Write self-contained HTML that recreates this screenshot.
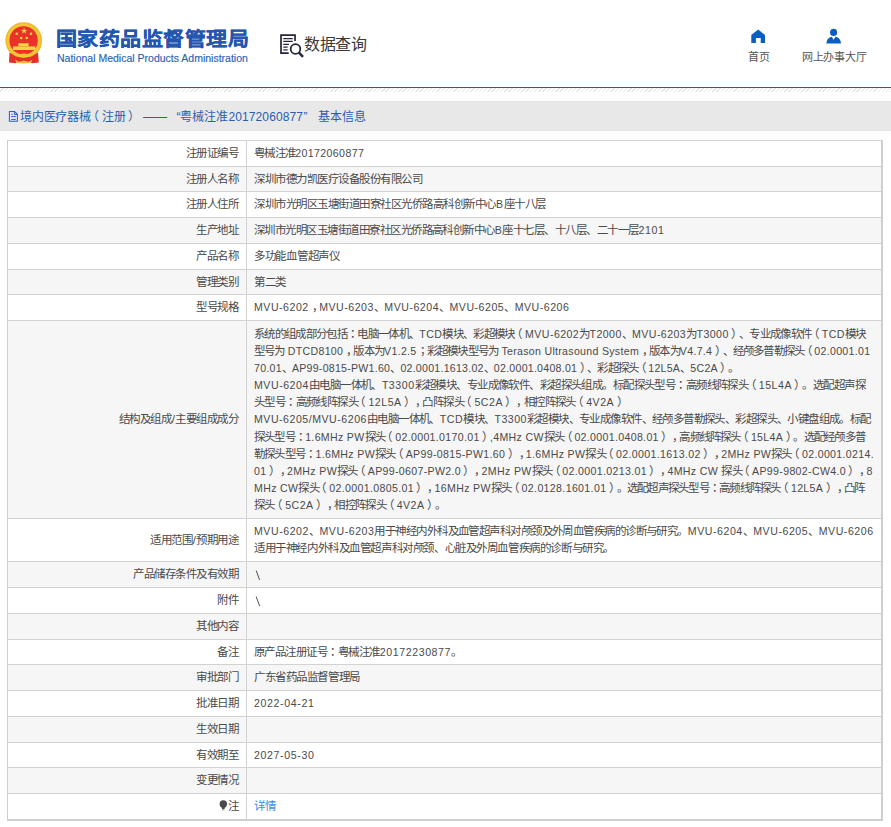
<!DOCTYPE html>
<html lang="zh-CN">
<head>
<meta charset="utf-8">
<style>
*{margin:0;padding:0;box-sizing:border-box}
html,body{width:891px;height:827px;overflow:hidden;background:#fff}
body{font-family:"Liberation Sans",sans-serif;position:relative;color:#444;text-spacing-trim:space-all}
.ln{--d:0px;letter-spacing:calc(var(--cj) + var(--d))}.la{font-size:10.6px;letter-spacing:calc(var(--lt) + var(--d))}:root{--cj:-0.5px;--lt:0.6px}
.bs{display:inline-block;vertical-align:-3px;margin-left:0.5px}
.pm{position:relative;left:3px}
.po{position:relative;left:-3.6px}.pc{position:relative;left:2.4px}
.abs{position:absolute}
#logo-t{left:56px;top:26px;font-size:21px;letter-spacing:0.45px;transform:scaleY(0.92);transform-origin:0 0;-webkit-text-stroke:0.3px #2456b0;font-weight:bold;color:#2456b0;white-space:nowrap;line-height:30px}
#logo-e{left:57px;top:52px;font-size:10.5px;-webkit-text-stroke:0.15px #2d5fb3;color:#2d5fb3;white-space:nowrap;line-height:13px}
#query{left:304px;top:33px;letter-spacing:-0.3px;font-size:16px;color:#3a3a3a;white-space:nowrap;line-height:24px}
.nav{font-size:11px;letter-spacing:-0.3px;color:#555;white-space:nowrap;line-height:14px}
#topline{left:0;top:87px;width:891px;height:1px;background:#0b5ec2}
#hatch{left:0;top:88px;width:891px;height:4px;background:repeating-linear-gradient(135deg,#fff 0,#fff 2px,#e6e6e6 2px,#e6e6e6 3px)}
#bar{left:0;top:101px;width:891px;height:30px;background:#e8e8e8}
.bt{top:109px;font-size:12px;color:#2a5db0;white-space:nowrap;line-height:17px}
#tbl{left:7px;top:140px;width:876px;height:681px;border:1px solid #cfcfcf;border-top:0;border-right-width:2px;border-bottom-width:2px}
.row{position:absolute;left:8px;width:873px;border-top:1px solid #d2d2d2}
.row.g{background:#f6f6f6}
.lab{position:absolute;left:0;width:238px;text-align:right;padding-right:8px;font-size:11.5px;line-height:17.05px;color:#4a4a4a;white-space:nowrap}
.val{position:absolute;left:246px;font-size:11.5px;line-height:17.05px;color:#4a4a4a;white-space:nowrap}
#vline{left:246px;top:140px;width:1px;height:680px;background:#d2d2d2}
.lnk{color:#3b8ee8}
.bulb{display:inline-block;width:9px;height:11px;margin-right:0px;vertical-align:-1px;background:none}
</style>
</head>
<body>
<!-- emblem -->
<svg class="abs" style="left:2px;top:18px" width="46" height="50" viewBox="0 0 46 50">
  <circle cx="21.75" cy="22.6" r="17.6" fill="#f5c737" stroke="#f0b92a" stroke-width="1.5"/>
  <circle cx="21.6" cy="22.4" r="14.2" fill="#e8322a"/>
  <path d="M7.5 34.5 L14 38.5 L21.7 40 L29.5 38.5 L36 34.5 L36.8 44.5 L30 45.2 L26 43.8 L21.7 44.8 L17.5 43.8 L13.5 45.2 L7 44.5 Z" fill="#e52f28"/>
  <path d="M8.5 33 Q21.7 42 35 33" fill="none" stroke="#f3c23a" stroke-width="1.6"/>
  <path d="M17 36.8 Q21.7 34.2 26.5 36.8 Q21.7 39.4 17 36.8 Z" fill="#f3c23a"/>
  <path d="M13 41.5 L17 44 L21.7 42.5 L26.5 44 L30.5 41.5 L29 45 L21.7 45.5 L14.5 45 Z" fill="#f3c23a"/>
  <polygon points="22.1,9.6 22.9,11.9 25.3,11.9 23.4,13.3 24.1,15.6 22.1,14.2 20.1,15.6 20.8,13.3 18.9,11.9 21.3,11.9" fill="#f6d045"/>
  <circle cx="14.8" cy="15.7" r="1.3" fill="#f6d045"/>
  <circle cx="29" cy="15.7" r="1.3" fill="#f6d045"/>
  <circle cx="19.2" cy="20" r="1.3" fill="#f6d045"/>
  <circle cx="24.8" cy="20" r="1.3" fill="#f6d045"/>
  <rect x="16.3" y="25.2" width="10.3" height="3.2" fill="#f6d045"/>
  <rect x="10.9" y="28.4" width="22.4" height="3.6" fill="#f6d045"/>
</svg>
<div id="logo-t" class="abs">国家药品监督管理局</div>
<div id="logo-e" class="abs">National Medical Products Administration</div>
<svg class="abs" style="left:276px;top:30px" width="32" height="30" viewBox="0 0 32 30">
  <path d="M12.7 23.2 H5 V5.2 H19.05 V10.9" fill="none" stroke="#25253b" stroke-width="1.7"/>
  <path d="M7.3 8.5 H16.7 M7.3 11.4 H16.7 M7.3 14.3 H12.9 M7.3 17.05 H11.6 M7.3 19.8 H11.6" stroke="#25253b" stroke-width="1.25"/>
  <circle cx="19.5" cy="19" r="4.8" fill="none" stroke="#25253b" stroke-width="1.8"/>
  <path d="M22.8 22.4 L27 26.8" stroke="#25253b" stroke-width="2.4"/>
</svg>
<div id="query" class="abs">数据查询</div>
<svg class="abs" style="left:746px;top:24px" width="24" height="24" viewBox="0 0 24 24">
  <path d="M5.3 11 L12.2 5.6 L19 11 V18.9 H14.7 V13.9 H9.9 V18.9 H5.3 Z" fill="#0a5fc4"/>
</svg>
<svg class="abs" style="left:822px;top:24px" width="24" height="24" viewBox="0 0 24 24">
  <circle cx="11.6" cy="8.4" r="3.55" fill="#0a5fc4"/>
  <path d="M4.35 19.4 C4.6 15.5 6.8 13.2 9.7 12.8 L11.6 15.7 L13.5 12.8 C16.5 13.2 18.8 15.5 19 19.4 Z" fill="#0a5fc4"/>
</svg>
<div class="abs nav" style="left:748px;top:50px">首页</div>
<div class="abs nav" style="left:802px;top:50px">网上办事大厅</div>
<div id="topline" class="abs"></div>
<div id="hatch" class="abs"></div>
<div id="bar" class="abs"></div>
<svg class="abs" style="left:4px;top:104px" width="24" height="24" viewBox="0 0 24 24">
  <path d="M5.4 7.5 H10.6 L13.4 10.3 V17.3 H5.4 Z" fill="none" stroke="#2d5fc8" stroke-width="1.05"/>
  <path d="M10.4 7.5 V10.5 H13.4" fill="none" stroke="#2d5fc8" stroke-width="1"/>
  <path d="M7.1 10.3 H8.7 M7.1 12.5 H11.9 M7.1 15.4 H11.9" stroke="#3a5fc8" stroke-width="1"/>
</svg>
<div class="abs bt" id="bt1" style="left:20px;letter-spacing:-0.25px">境内医疗器械<span class="po">（</span>注册<span class="pc">）</span></div>
<div class="abs bt" id="bt2" style="left:143px">——</div>
<div class="abs bt" id="bt3" style="left:176.5px">“粤械注准<span style="letter-spacing:0.1px">20172060877</span><span style="margin-left:0.5px">”</span></div>
<div class="abs bt" id="bt4" style="left:318px">基本信息</div>
<div id="tbl" class="abs"></div>
<div id="rows">
<div class="row" style="top:140.00px;height:26.00px"><div class="lab" style="top:4.47px"><span class="ln" id="lab0">注册证编号</span></div><div class="val" style="top:4.47px"><span class="ln" id="l0_0" style="--d:-0.214px">粤械注准<span class="la">20172060877</span></span></div></div>
<div class="row g" style="top:166.00px;height:25.00px"><div class="lab" style="top:3.97px"><span class="ln" id="lab1">注册人名称</span></div><div class="val" style="top:3.97px"><span class="ln" id="l1_0" style="--d:0.000px">深圳市德力凯医疗设备股份有限公司</span></div></div>
<div class="row" style="top:191.00px;height:26.00px"><div class="lab" style="top:4.47px"><span class="ln" id="lab2">注册人住所</span></div><div class="val" style="top:4.47px"><span class="ln" id="l2_0" style="--d:0.022px">深圳市光明区玉塘街道田寮社区光侨路高科创新中心<span class="la">B</span>座十八层</span></div></div>
<div class="row g" style="top:217.00px;height:26.00px"><div class="lab" style="top:4.47px"><span class="ln" id="lab3">生产地址</span></div><div class="val" style="top:4.47px"><span class="ln" id="l3_0" style="--d:-0.030px">深圳市光明区玉塘街道田寮社区光侨路高科创新中心<span class="la">B</span>座十七层、十八层、二十一层<span class="la">2101</span></span></div></div>
<div class="row" style="top:243.00px;height:26.00px"><div class="lab" style="top:4.47px"><span class="ln" id="lab4">产品名称</span></div><div class="val" style="top:4.47px"><span class="ln" id="l4_0" style="--d:0.229px">多功能血管超声仪</span></div></div>
<div class="row g" style="top:269.00px;height:25.00px"><div class="lab" style="top:3.97px"><span class="ln" id="lab5">管理类别</span></div><div class="val" style="top:3.97px"><span class="ln" id="l5_0">第二类</span></div></div>
<div class="row" style="top:294.00px;height:26.00px"><div class="lab" style="top:4.47px"><span class="ln" id="lab6">型号规格</span></div><div class="val" style="top:4.47px"><span class="ln" id="l6_0" style="--d:-0.088px"><span class="la">MVU-6202</span><span class="pm">，</span><span class="la">MVU-6203</span>、<span class="la">MVU-6204</span>、<span class="la">MVU-6205</span>、<span class="la">MVU-6206</span></span></div></div>
<div class="row g" style="top:320.00px;height:198.00px"><div class="lab" style="top:90.47px"><span class="ln" id="lab7">结构及组成<span style="margin:0 0.6px">/</span>主要组成成分</span></div><div class="val" style="top:5.22px"><span class="ln" id="l7_0" style="--d:-0.168px">系统的组成部分包括<span lang="zh-TW">：</span>电脑一体机、<span class="la">TCD</span>模块、彩超模块<span class="po">（</span><span class="la">MVU-6202</span>为<span class="la">T2000</span>、<span class="la">MVU-6203</span>为<span class="la">T3000</span><span class="pc">）</span>、专业成像软件<span class="po">（</span><span class="la">TCD</span>模块</span><br><span class="ln" id="l7_1" style="--d:-0.299px">型号为<span class="la"> DTCD8100</span><span class="pm">，</span>版本为<span class="la">V1.2.5</span><span lang="zh-TW">；</span>彩超模块型号为<span class="la"> Terason Ultrasound System</span><span class="pm">，</span>版本为<span class="la">V4.7.4</span><span class="pc">）</span>、经颅多普勒探头<span class="po">（</span><span class="la">02.0001.01</span></span><br><span class="ln" id="l7_2" style="--d:-0.347px"><span class="la">70.01</span>、<span class="la">AP99-0815-PW1.60</span>、<span class="la">02.0001.1613.02</span>、<span class="la">02.0001.0408.01</span><span class="pc">）</span>、彩超探头<span class="po">（</span><span class="la">12L5A</span>、<span class="la">5C2A</span><span class="pc">）</span>。</span><br><span class="ln" id="l7_3" style="--d:-0.072px"><span class="la">MVU-6204</span>由电脑一体机、<span class="la">T3300</span>彩超模块、专业成像软件、彩超探头组成。标配探头型号<span lang="zh-TW">：</span>高频线阵探头<span class="po">（</span><span class="la">15L4A</span><span class="pc">）</span>。选配超声探</span><br><span class="ln" id="l7_4" style="--d:-0.097px">头型号<span lang="zh-TW">：</span>高频线阵探头<span class="po">（</span><span class="la">12L5A</span><span class="pc">）</span><span class="pm">，</span>凸阵探头<span class="po">（</span><span class="la">5C2A</span><span class="pc">）</span><span class="pm">，</span>相控阵探头<span class="po">（</span><span class="la">4V2A</span><span class="pc">）</span></span><br><span class="ln" id="l7_5" style="--d:-0.087px"><span class="la">MVU-6205/MVU-6206</span>由电脑一体机、<span class="la">TCD</span>模块、<span class="la">T3300</span>彩超模块、专业成像软件、经颅多普勒探头、彩超探头、小键盘组成。标配</span><br><span class="ln" id="l7_6" style="--d:-0.275px">探头型号<span lang="zh-TW">：</span><span class="la">1.6MHz PW</span>探头<span class="po">（</span><span class="la">02.0001.0170.01</span><span class="pc">）</span><span class="la">,4MHz CW</span>探头<span class="po">（</span><span class="la">02.0001.0408.01</span><span class="pc">）</span><span class="pm">，</span>高频线阵探头<span class="po">（</span><span class="la">15L4A</span><span class="pc">）</span>。选配经颅多普</span><br><span class="ln" id="l7_7" style="--d:-0.264px">勒探头型号<span lang="zh-TW">：</span><span class="la">1.6MHz PW</span>探头<span class="po">（</span><span class="la">AP99-0815-PW1.60</span><span class="pc">）</span><span class="pm">，</span><span class="la">1.6MHz PW</span>探头<span class="po">（</span><span class="la">02.0001.1613.02</span><span class="pc">）</span><span class="pm">，</span><span class="la">2MHz PW</span>探头<span class="po">（</span><span class="la">02.0001.0214.</span></span><br><span class="ln" id="l7_8" style="--d:-0.265px"><span class="la">01</span><span class="pc">）</span><span class="pm">，</span><span class="la">2MHz PW</span>探头<span class="po">（</span><span class="la">AP99-0607-PW2.0</span><span class="pc">）</span><span class="pm">，</span><span class="la">2MHz PW</span>探头<span class="po">（</span><span class="la">02.0001.0213.01</span><span class="pc">）</span><span class="pm">，</span><span class="la">4MHz CW </span>探头<span class="po">（</span><span class="la">AP99-9802-CW4.0</span><span class="pc">）</span><span class="pm">，</span><span class="la">8</span></span><br><span class="ln" id="l7_9" style="--d:-0.251px"><span class="la">MHz CW</span>探头<span class="po">（</span><span class="la">02.0001.0805.01</span><span class="pc">）</span><span class="pm">，</span><span class="la">16MHz PW</span>探头<span class="po">（</span><span class="la">02.0128.1601.01</span><span class="pc">）</span>。选配超声探头型号<span lang="zh-TW">：</span>高频线阵探头<span class="po">（</span><span class="la">12L5A</span><span class="pc">）</span><span class="pm">，</span>凸阵</span><br><span class="ln" id="l7_10" style="--d:-0.120px">探头<span class="po">（</span><span class="la">5C2A</span><span class="pc">）</span><span class="pm">，</span>相控阵探头<span class="po">（</span><span class="la">4V2A</span><span class="pc">）</span>。</span></div></div>
<div class="row" style="top:518.00px;height:43.00px"><div class="lab" style="top:12.97px"><span class="ln" id="lab8">适用范围<span style="margin:0 0.6px">/</span>预期用途</span></div><div class="val" style="top:3.80px"><span class="ln" id="l8_0" style="--d:-0.056px"><span class="la">MVU-6202</span>、<span class="la">MVU-6203</span>用于神经内外科及血管超声科对颅颈及外周血管疾病的诊断与研究。<span class="la">MVU-6204</span>、<span class="la">MVU-6205</span>、<span class="la">MVU-6206</span></span><br><span class="ln" id="l8_1" style="--d:0.085px">适用于神经内外科及血管超声科对颅颈、心脏及外周血管疾病的诊断与研究。</span></div></div>
<div class="row g" style="top:561.00px;height:26.00px"><div class="lab" style="top:4.47px"><span class="ln" id="lab9">产品储存条件及有效期</span></div><div class="val" style="top:4.47px"><span class="ln" id="l9_0"><svg class="bs" width="6" height="11" viewBox="0 0 6 11"><path d="M1.2 0.6 L4.6 10" stroke="#505050" stroke-width="1"/></svg></span></div></div>
<div class="row" style="top:587.00px;height:26.00px"><div class="lab" style="top:4.47px"><span class="ln" id="lab10">附件</span></div><div class="val" style="top:4.47px"><span class="ln" id="l10_0"><svg class="bs" width="6" height="11" viewBox="0 0 6 11"><path d="M1.2 0.6 L4.6 10" stroke="#505050" stroke-width="1"/></svg></span></div></div>
<div class="row g" style="top:613.00px;height:26.00px"><div class="lab" style="top:4.47px"><span class="ln" id="lab11">其他内容</span></div><div class="val" style="top:4.47px"></div></div>
<div class="row" style="top:639.00px;height:25.00px"><div class="lab" style="top:3.97px"><span class="ln" id="lab12">备注</span></div><div class="val" style="top:3.97px"><span class="ln" id="l12_0" style="--d:-0.017px">原产品注册证号<span lang="zh-TW">：</span>粤械注准<span class="la">20172230877</span>。</span></div></div>
<div class="row g" style="top:664.00px;height:26.00px"><div class="lab" style="top:4.47px"><span class="ln" id="lab13">审批部门</span></div><div class="val" style="top:4.47px"><span class="ln" id="l13_0" style="--d:0.067px">广东省药品监督管理局</span></div></div>
<div class="row" style="top:690.00px;height:26.00px"><div class="lab" style="top:4.47px"><span class="ln" id="lab14">批准日期</span></div><div class="val" style="top:4.47px"><span class="ln" id="l14_0" style="--d:0.022px"><span class="la">2022-04-21</span></span></div></div>
<div class="row g" style="top:716.00px;height:26.00px"><div class="lab" style="top:4.47px"><span class="ln" id="lab15">生效日期</span></div><div class="val" style="top:4.47px"></div></div>
<div class="row" style="top:742.00px;height:25.00px"><div class="lab" style="top:3.97px"><span class="ln" id="lab16">有效期至</span></div><div class="val" style="top:3.97px"><span class="ln" id="l16_0" style="--d:0.022px"><span class="la">2027-05-30</span></span></div></div>
<div class="row g" style="top:767.00px;height:26.00px"><div class="lab" style="top:4.47px"><span class="ln" id="lab17">变更情况</span></div><div class="val" style="top:4.47px"></div></div>
<div class="row" style="top:793.00px;height:26.00px"><div class="lab" style="top:4.47px"><span class="ln" id="lab18"><svg class="bulb" viewBox="0 0 9 11"><circle cx="4.3" cy="4" r="3.7" fill="#4a4a4a"/><path d="M2.4 6.5 L6.2 6.5 L5.4 9.3 L3.2 9.3 Z" fill="#4a4a4a"/><rect x="3.2" y="9.5" width="2.2" height="1" fill="#9a9a9a"/></svg>注</span></div><div class="val" style="top:4.47px"><span class="ln lnk" id="l18_0">详情</span></div></div>
</div>
<div id="vline" class="abs"></div>
</body>
</html>
